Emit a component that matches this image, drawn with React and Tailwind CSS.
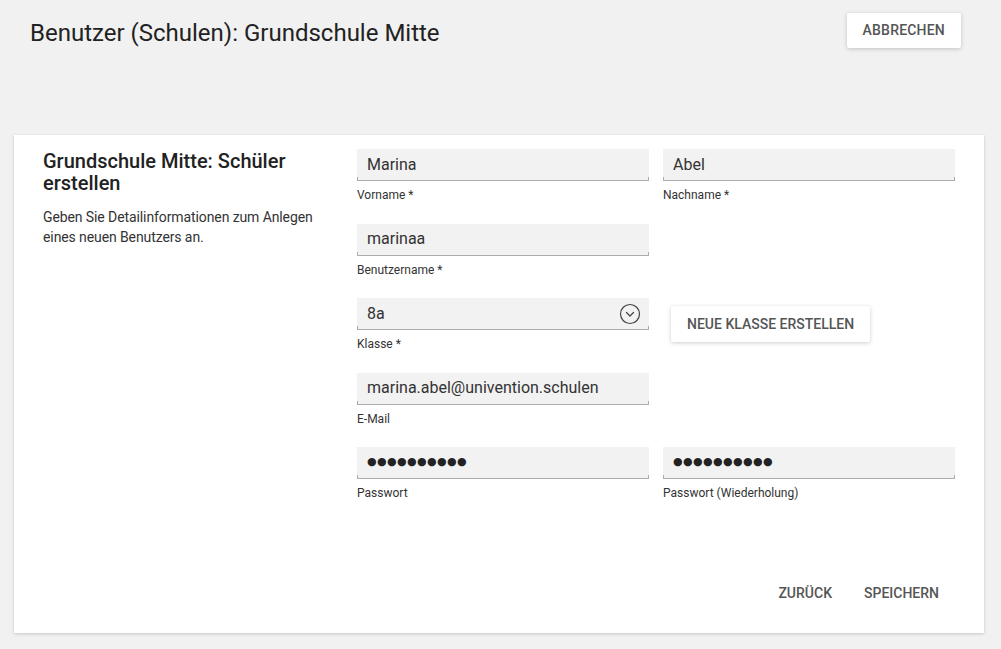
export default function App() {
  return (
    <div className="min-h-[649px] bg-[#f1f1f1] font-['Roboto',sans-serif] text-[#1e1e1e]">
      {/* Page header */}
      <div className="flex items-start justify-between pl-[30px] pr-[40px] pt-[13px] h-[135px]">
        <h1 className="text-[24px] leading-[40px] text-[#222]">Benutzer (Schulen): Grundschule Mitte</h1>
        <button className="h-[35px] px-[16px] bg-white rounded-[2px] shadow-[0_1px_4px_rgba(0,0,0,0.2)] text-[14px] font-medium uppercase text-[#555] tracking-[0.2px]">
          Abbrechen
        </button>
      </div>

      {/* Card */}
      <div className="mx-[14px] w-[970px] bg-white shadow-[0_1px_3px_rgba(0,0,0,0.18)] px-[29px] pt-[14px] pb-[22px]">
        <div className="flex">
          <div className="w-[314px] shrink-0 pr-[28px] pt-[1px]">
            <h2 className="text-[20px] leading-[22px] font-medium text-[#222]">Grundschule Mitte: Schüler erstellen</h2>
            <p className="mt-[13px] text-[14px] leading-[20px] text-[#333] tracking-[-0.1px]">
              Geben Sie Detailinformationen zum Anlegen eines neuen Benutzers an.
            </p>
          </div>

          <div className="flex flex-col gap-[20.5px] w-[598px]">
            <div className="grid grid-cols-2 gap-x-[14px]">
              <Field value="Marina" label="Vorname *" />
              <Field value="Abel" label="Nachname *" />
            </div>
            <div className="grid grid-cols-2 gap-x-[14px]">
              <Field value="marinaa" label="Benutzername *" />
            </div>
            <div className="grid grid-cols-2 gap-x-[14px]">
              <Field value="8a" label="Klasse *" select />
              <div className="pl-[8px] pt-[8px]">
                <button className="h-[36px] px-[16px] bg-white rounded-[2px] shadow-[0_1px_4px_rgba(0,0,0,0.2)] text-[14px] font-medium uppercase text-[#555]">
                  Neue Klasse erstellen
                </button>
              </div>
            </div>
            <div className="grid grid-cols-2 gap-x-[14px]">
              <Field value="marina.abel@univention.schulen" label="E-Mail" />
            </div>
            <div className="grid grid-cols-2 gap-x-[14px]">
              <Field value="●●●●●●●●●●" label="Passwort" password />
              <Field value="●●●●●●●●●●" label="Passwort (Wiederholung)" password />
            </div>
          </div>
        </div>

        {/* Footer actions */}
        <div className="flex justify-end mt-[74px]">
          <button className="h-[36px] px-[16px] text-[14px] font-medium uppercase text-[#555]">Zurück</button>
          <button className="h-[36px] px-[16px] text-[14px] font-medium uppercase text-[#555]">Speichern</button>
        </div>
      </div>
    </div>
  );
}

function Field({ value, label, select, password }) {
  return (
    <div>
      <div className="relative bg-[#f2f2f2] h-[32px] flex items-center justify-between pl-[10px] pr-[8px] border-b border-[#adadad]">
        {password ? (
          <span className="text-[11px] tracking-[0.4px] text-[#222] font-['DejaVu_Sans',sans-serif]">{value}</span>
        ) : (
          <span className="text-[16px] text-[#333]">{value}</span>
        )}
        {select && (
          <svg width="22" height="22" viewBox="0 0 22 22" fill="none" stroke="#444" strokeWidth="1.2">
            <circle cx="11" cy="11" r="9.5" />
            <path d="M7.5 9.5 L11 13 L14.5 9.5" strokeLinecap="round" strokeLinejoin="round" />
          </svg>
        )}
        {/* underline end ticks */}
        <span className="absolute left-0 bottom-0 h-[3px] w-px bg-[#adadad]" />
        <span className="absolute right-0 bottom-0 h-[3px] w-px bg-[#adadad]" />
      </div>
      <div className="mt-[6px] text-[12px] leading-[16px] text-[#333]">{label}</div>
    </div>
  );
}
